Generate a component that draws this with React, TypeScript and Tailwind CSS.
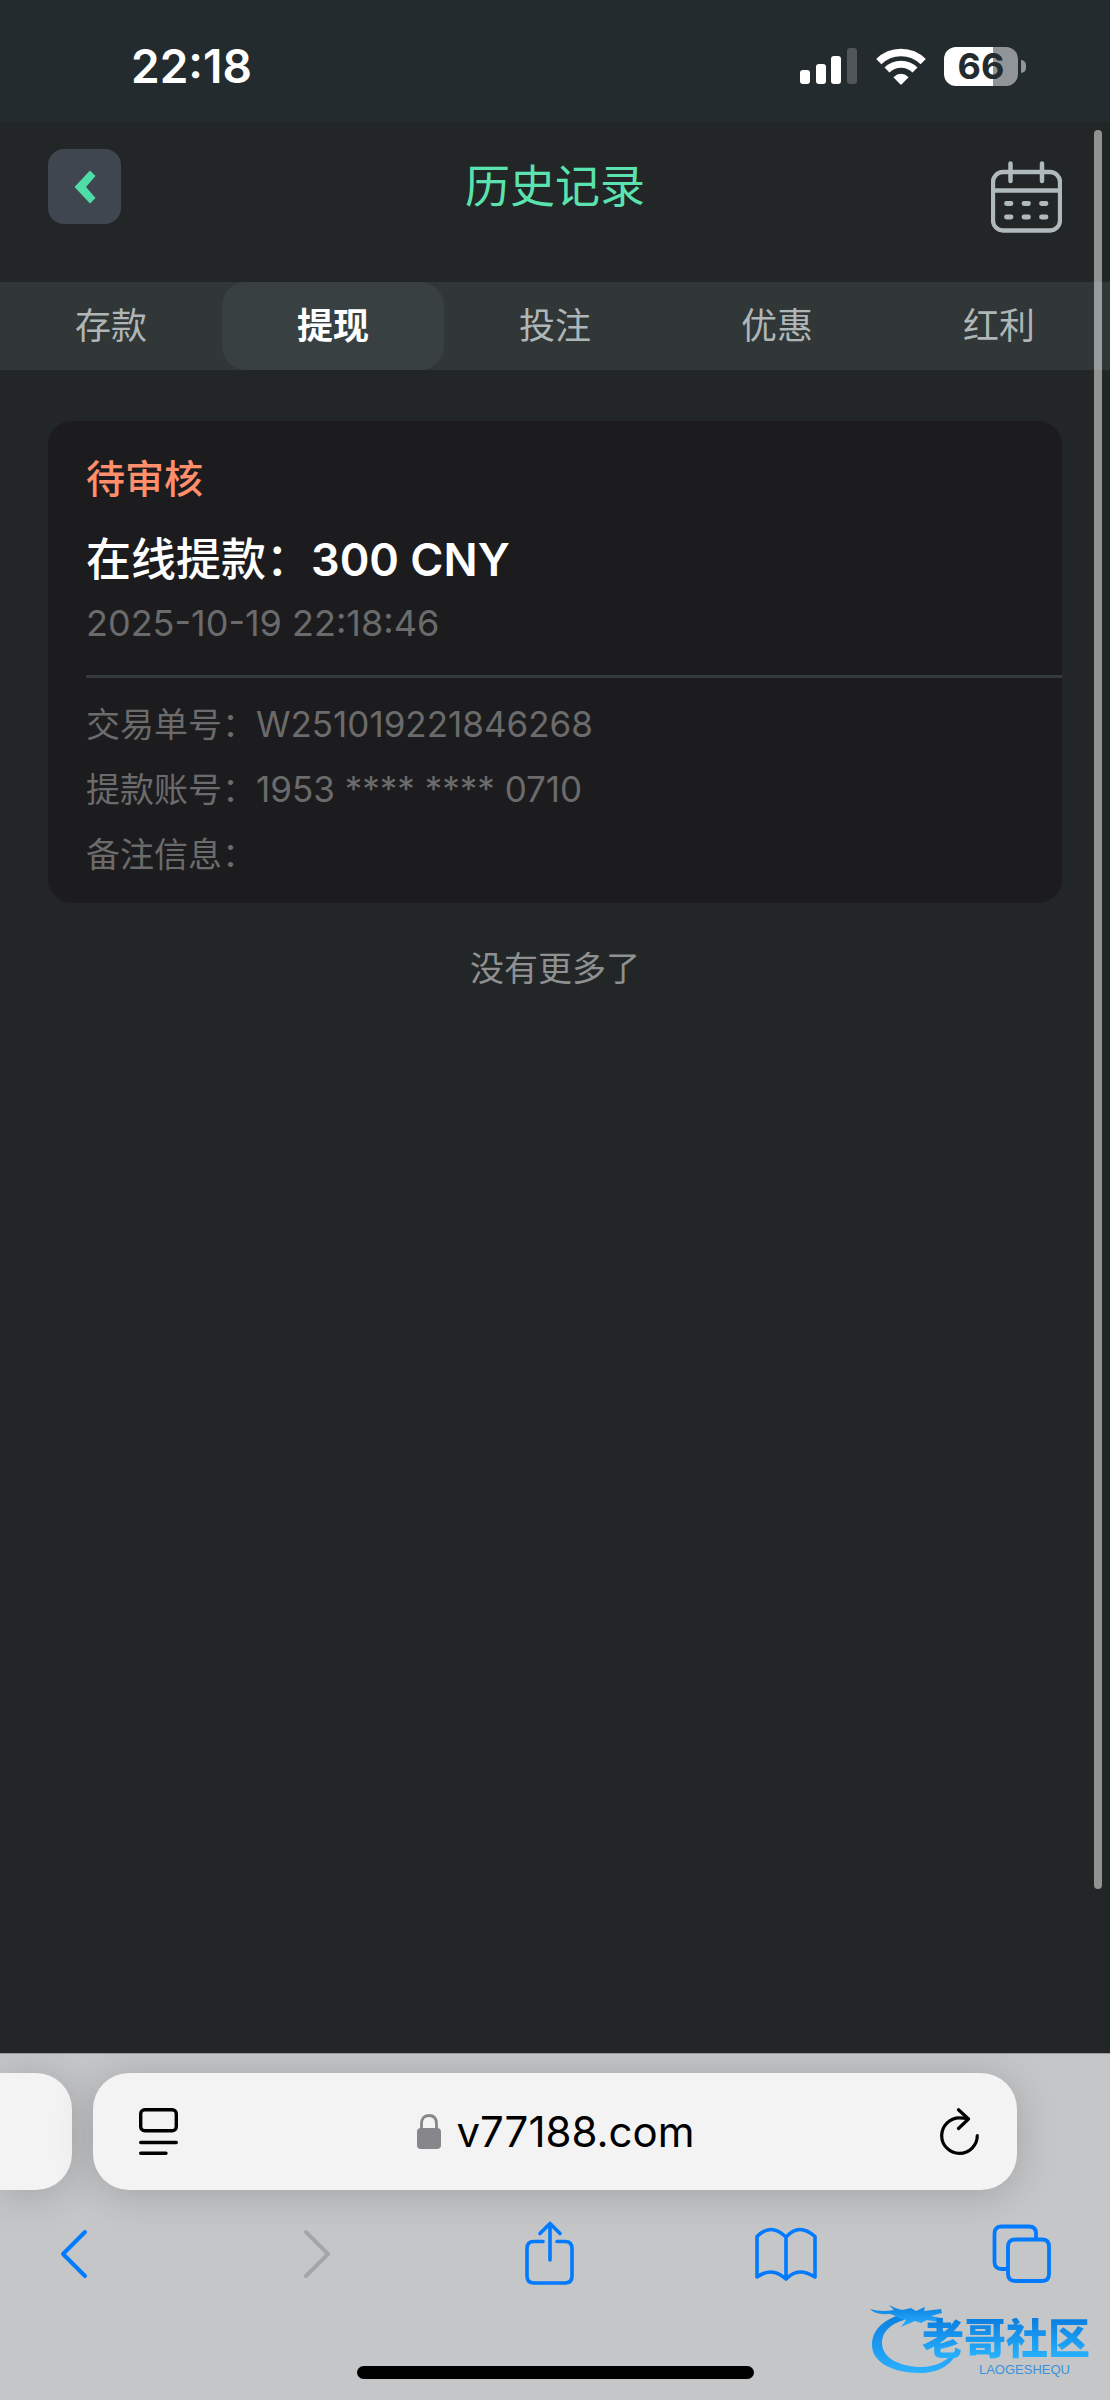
import React from "react";

const tabs = ["存款", "提现", "投注", "优惠", "红利"];

const details = [
  { label: "交易单号：", value: "W251019221846268" },
  { label: "提款账号：", value: "1953 **** **** 0710" },
  { label: "备注信息：", value: "" },
];

function SignalIcon() {
  return (
    <svg width="58" height="36" viewBox="0 0 58 36" aria-hidden="true">
      <rect x="0" y="22" width="10" height="14" rx="3" fill="#fff" />
      <rect x="16" y="16" width="10" height="20" rx="3" fill="#fff" />
      <rect x="31" y="8" width="10" height="28" rx="3" fill="#fff" />
      <rect x="47" y="0" width="10" height="36" rx="3" fill="#515659" />
    </svg>
  );
}

function WifiIcon() {
  return (
    <svg width="50" height="37" viewBox="0 0 50 37" aria-hidden="true" fill="none" stroke="#fff">
      <path d="M2.8 13.6A31.5 31.5 0 0 1 47.2 13.6" strokeWidth="7.4" />
      <path d="M11 22A19.8 19.8 0 0 1 39 22" strokeWidth="7" />
      <path d="M17.4 29.2Q25 22.4 32.6 29.2L26 36Q25 37 24 36Z" fill="#fff" stroke="none" />
    </svg>
  );
}

function Battery() {
  return (
    <div className="flex items-center gap-[3px]" role="img" aria-label="电量 66">
      <div className="flex h-[39px] w-[74px] items-center justify-center rounded-xl bg-[linear-gradient(to_right,#fff_66%,#919598_66%)] text-4xl leading-none font-bold text-[#242b2e]">
        66
      </div>
      <div className="h-[13px] w-[5px] rounded-r-full bg-[#919598]" />
    </div>
  );
}

function CalendarIcon() {
  return (
    <svg width="71" height="72" viewBox="0 0 71 72" fill="none" stroke="#b0babd" strokeLinecap="round" aria-hidden="true">
      <rect x="2" y="11" width="67" height="58.500" rx="10" strokeWidth="4.300" />
      <path d="M2 29.500H69" strokeWidth="4.500" strokeLinecap="butt" />
      <path d="M19.500 2.500V20M51 2.500V20" strokeWidth="4.500" />
      <path d="M15.500 42.500H20M33 42.500H37.500M50.500 42.500H55M15.500 56H20M33 56H37.500M50.500 56H55" strokeWidth="4.800" />
    </svg>
  );
}

function PageIcon() {
  return (
    <svg width="39" height="47" viewBox="0 0 39 47" fill="none" stroke="#000" strokeWidth="3.4" strokeLinecap="round" aria-hidden="true">
      <rect x="1.700" y="1.700" width="35.600" height="21" rx="4" />
      <path d="M1.700 34.500H37.300M1.700 45.200H27" />
    </svg>
  );
}

function LockIcon() {
  return (
    <svg width="24" height="35" viewBox="0 0 24 35" aria-hidden="true">
      <path d="M4.500 17V10Q4.500 1.500 12 1.500T19.500 10V17" fill="none" stroke="#86868b" strokeWidth="2.800" />
      <rect x="0" y="14" width="24" height="21" rx="4" fill="#86868b" />
    </svg>
  );
}

function ReloadIcon() {
  return (
    <svg width="39" height="47" viewBox="0 0 39 47" fill="none" stroke="#000" strokeWidth="3.200" strokeLinecap="round" strokeLinejoin="round" aria-hidden="true">
      <path d="M37.300 27.500A17.800 17.800 0 1 1 19.500 9.800Q24 9.800 28 10.800" />
      <path d="M18.500 1.800L28.500 11L18.500 20.500" />
    </svg>
  );
}

const toolbar = [
  {
    label: "后退",
    color: "text-[#007aff]",
    path: "M42 11L20 33L42 55",
    width: 4,
  },
  {
    label: "前进",
    color: "text-[#a5a6a7]",
    path: "M26 11L48 33L26 55",
    width: 4,
  },
  {
    label: "共享",
    color: "text-[#007aff]",
    path: "M26 20.500H17Q10 20.500 10 27.500V55Q10 62 17 62H48Q55 62 55 55V27.500Q55 20.500 48 20.500H40M33 39V3M23 12.500L33 2.500L43 12.500",
    width: 3.6,
  },
  {
    label: "书签",
    color: "text-[#007aff]",
    path: "M33 16Q25 8.500 18 8.500T4 15.500V56Q11 51 18 51T33 58Q40 51 47 51T62 56V15.500Q54 8.500 47 8.500T33 16V58",
    width: 3.6,
  },
  {
    label: "标签页",
    color: "text-[#007aff]",
    path: "M16 48H11.500Q4.500 48 4.500 41V12.500Q4.500 5.500 11.500 5.500H39Q46 5.500 46 12.500V18M25 18.500H52Q59 18.500 59 25.500V53Q59 60 52 60H25Q18 60 18 53V25.500Q18 18.500 25 18.500Z",
    width: 3.8,
  },
];

function Watermark() {
  return (
    <div className="pointer-events-none absolute right-4 bottom-6 h-[72px] w-[224px]">
      <svg className="absolute inset-0" width="224" height="72" viewBox="0 0 224 72" aria-hidden="true">
        <defs>
          <linearGradient id="dragon" x1="0" y1="0" x2="0" y2="1">
            <stop offset="0" stopColor="#0a80e0" />
            <stop offset="1" stopColor="#2bb0ff" />
          </linearGradient>
        </defs>
        <g fill="url(#dragon)">
          <path d="M32 10C12 16 2 27 2 41C2 58 22 69 50 69C70 69 84 60 88 44C78 57 66 63 51 63C30 63 12 54 12 39C12 28 20 20 34 16Z" />
          <path d="M0 5Q11 8.500 24 6L19 1Q26 5 32 6L41 4L46 7L55 3L54 7L71 5L72 9L61 12L71 14L68 18L57 16L51 19L45 17L31 23L36 16L28 14Q24 10 18 10Q5 11 0 5Z" />
        </g>
      </svg>
      <div className="absolute top-[14px] right-1 bg-gradient-to-b from-[#0a7de0] to-[#2bb4ff] bg-clip-text text-[42px] leading-[42px] font-black text-transparent">
        老哥社区
      </div>
      <div className="absolute right-6 bottom-0 font-['Liberation_Sans'] text-[13px] leading-none text-[#3b92dc]">LAOGESHEQU</div>
    </div>
  );
}

export default function App() {
  return (
    <div className="relative flex min-h-screen flex-col bg-[#222627] font-['Inter','Noto_Sans_CJK_SC',sans-serif]">
      <div className="flex h-[122px] items-center justify-between bg-[#242b2e] pt-[10px] pr-[84px] pb-0 pl-[131px]">
        <time className="text-[46px] leading-none font-semibold text-white">22:18</time>
        <div className="flex items-center gap-[18px]">
          <SignalIcon />
          <WifiIcon />
          <Battery />
        </div>
      </div>

      <header className="grid h-[160px] grid-cols-[73px_1fr_73px] items-start px-12 pt-[27px]">
        <button aria-label="返回" className="flex h-[75px] items-center justify-center rounded-2xl bg-[#404650]">
          <svg width="22" height="34" viewBox="0 0 22 34" aria-hidden="true">
            <path d="M16 0.500L21.500 6L12 17L21.500 28L16 33.500L0.500 17Z" fill="#4fdda6" />
          </svg>
        </button>
        <h1 className="text-center text-[45px] leading-[75px] text-[#5be3af]">历史记录</h1>
        <button aria-label="选择日期" className="mt-3 flex justify-end">
          <CalendarIcon />
        </button>
      </header>

      <nav className="grid h-[88px] grid-cols-5 bg-[#313636]">
        {tabs.map((tab, i) => (
          <button
            key={tab}
            aria-current={i === 1 ? "page" : undefined}
            className={
              i === 1
                ? "rounded-3xl bg-[#394041] text-4xl font-bold text-white"
                : "text-4xl text-[#aeb6b8]"
            }
          >
            {tab}
          </button>
        ))}
      </nav>

      <main className="flex-1 px-12 pt-[51px]">
        <article className="rounded-3xl bg-[#1c1c1e] pt-8 pb-4 pl-[38px]">
          <p className="text-[39px] leading-[52px] font-medium text-[#ff8f6b]">待审核</p>
          <h2 className="mt-5 text-[45px] leading-[70px] font-medium text-white">在线提款：<span className="font-semibold">300 CNY</span></h2>
          <p className="text-4xl leading-[56px] text-[#6b6b6c]">2025-10-19 22:18:46</p>
          <hr className="mt-6 mb-[14px] border-t-[3px] border-[#34393a]" />
          <dl className="leading-[65px] text-[#6b6b6c]">
            {details.map((d) => (
              <div key={d.label} className="flex">
                <dt className="text-[34px]">{d.label}</dt>
                <dd className="text-[35px]">{d.value}</dd>
              </div>
            ))}
          </dl>
        </article>
        <p className="mt-[41px] text-center text-[34px] leading-[50px] text-[#8e9091]">没有更多了</p>
      </main>

      <div className="absolute top-[130px] right-2 bottom-[511px] w-2 rounded-full bg-white/50" />

      <footer className="relative h-[347px] overflow-hidden border-t border-[#9a9c9c] bg-[#c5c6c8]">
        <div className="flex gap-[21px] pt-[19px] pr-[93px]">
          <div className="h-[117px] w-[72px] rounded-r-[36px] bg-[#f3f3f3] shadow-[0_4px_40px_rgba(0,0,0,0.18)]" />
          <div className="flex h-[117px] flex-1 items-center justify-between rounded-[36px] bg-[#f3f3f3] pr-[38px] pl-[46px] shadow-[0_4px_40px_rgba(0,0,0,0.18)]">
            <button aria-label="页面菜单">
              <PageIcon />
            </button>
            <label className="flex items-center gap-[15px] pr-[6px]">
              <LockIcon />
              <input
                aria-label="网址"
                defaultValue="v77188.com"
                className="field-sizing-content bg-transparent text-[42px] leading-[50px] text-black outline-none"
              />
            </label>
            <button aria-label="重新载入">
              <ReloadIcon />
            </button>
          </div>
        </div>
        <div className="mt-[31px] flex justify-between pr-[54px] pl-[43px]">
          {toolbar.map((t) => (
            <button key={t.label} aria-label={t.label} className={t.color}>
              <svg width="66" height="66" viewBox="0 0 66 66" fill="none" stroke="currentColor" strokeWidth={t.width} strokeLinecap="round" strokeLinejoin="round" aria-hidden="true">
                <path d={t.path} />
              </svg>
            </button>
          ))}
        </div>
        <div className="mx-auto mt-[79px] h-[13px] w-[397px] rounded-full bg-black" />
        <Watermark />
      </footer>
    </div>
  );
}
